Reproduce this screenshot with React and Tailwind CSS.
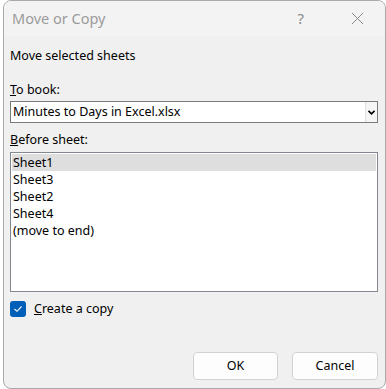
import React from 'react'

const SHEETS = ['Sheet1', 'Sheet3', 'Sheet2', 'Sheet4', '(move to end)']

export default function App() {
  return (
    <div className="w-[386px] h-[389px] bg-white" style={{ fontFamily: '"Noto Sans", "Open Sans", sans-serif' }}>
      <div className="ml-[3px] w-[383px] h-[389px] rounded-[8px] border border-[#a9a9a9] bg-[#f0f0f0] flex flex-col overflow-hidden text-[12.5px] text-[#000]">
        {/* Title bar */}
        <div className="h-[35px] bg-[#f3f3f3] flex items-center shrink-0">
          <span className="ml-[8px] text-[14.5px] text-[#9b9b9b]">Move or Copy</span>
          <span className="ml-auto mr-[47px] text-[15px] text-[#8a8a8a]">?</span>
          <svg className="mr-[21px]" width="13" height="13" viewBox="0 0 13 13">
            <path d="M1 1 L12 12 M12 1 L1 12" stroke="#8a8a8a" strokeWidth="1" fill="none" />
          </svg>
        </div>

        {/* Body */}
        <div className="pl-[6px] flex flex-col">
          <div className="mt-[12px] leading-[16px]">Move selected sheets</div>

          <div className="mt-[18px] leading-[16px]"><span className="underline">T</span>o book:</div>
          <div className="mt-[3px] w-[368px] h-[22px] border border-[#7a7a7a] bg-white flex items-center">
            <span className="ml-[2px] leading-[16px]">Minutes to Days in Excel.xlsx</span>
            <div className="ml-auto w-[12px] h-full bg-[#f5f5f5] border-l border-[#e0e0e0] flex items-center justify-center">
              <svg width="7" height="5" viewBox="0 0 7 5">
                <path d="M0.5 0.8 L3.5 3.8 L6.5 0.8" stroke="#000" strokeWidth="1.6" fill="none" />
              </svg>
            </div>
          </div>

          <div className="mt-[9px] leading-[16px]"><span className="underline">B</span>efore sheet:</div>
          <div className="mt-[4px] w-[368px] h-[140px] border border-[#828790] bg-white p-[1px]">
            {SHEETS.map((s, i) => (
              <div
                key={s}
                className={`h-[17px] leading-[17px] pl-[1px] ${i === 0 ? 'bg-[#dededf]' : ''}`}
              >
                {s}
              </div>
            ))}
          </div>

          <div className="mt-[9px] flex items-center">
            <div className="w-[16px] h-[16px] rounded-[3px] bg-[#005fb8] flex items-center justify-center">
              <svg width="10" height="8" viewBox="0 0 10 8">
                <path d="M1.5 4 L4 6.3 L8.5 1.5" stroke="#fff" strokeWidth="1.1" fill="none" />
              </svg>
            </div>
            <span className="ml-[8px] leading-[16px]"><span className="underline">C</span>reate a copy</span>
          </div>

          <div className="mt-[35px] flex justify-end gap-[14px] w-[368px]">
            <button className="w-[85px] h-[28px] rounded-[4px] border border-[#d2d2d2] bg-[#fdfdfd] text-[12.5px]">OK</button>
            <button className="w-[86px] h-[28px] rounded-[4px] border border-[#d2d2d2] bg-[#fdfdfd] text-[12.5px]">Cancel</button>
          </div>
        </div>
      </div>
    </div>
  )
}
